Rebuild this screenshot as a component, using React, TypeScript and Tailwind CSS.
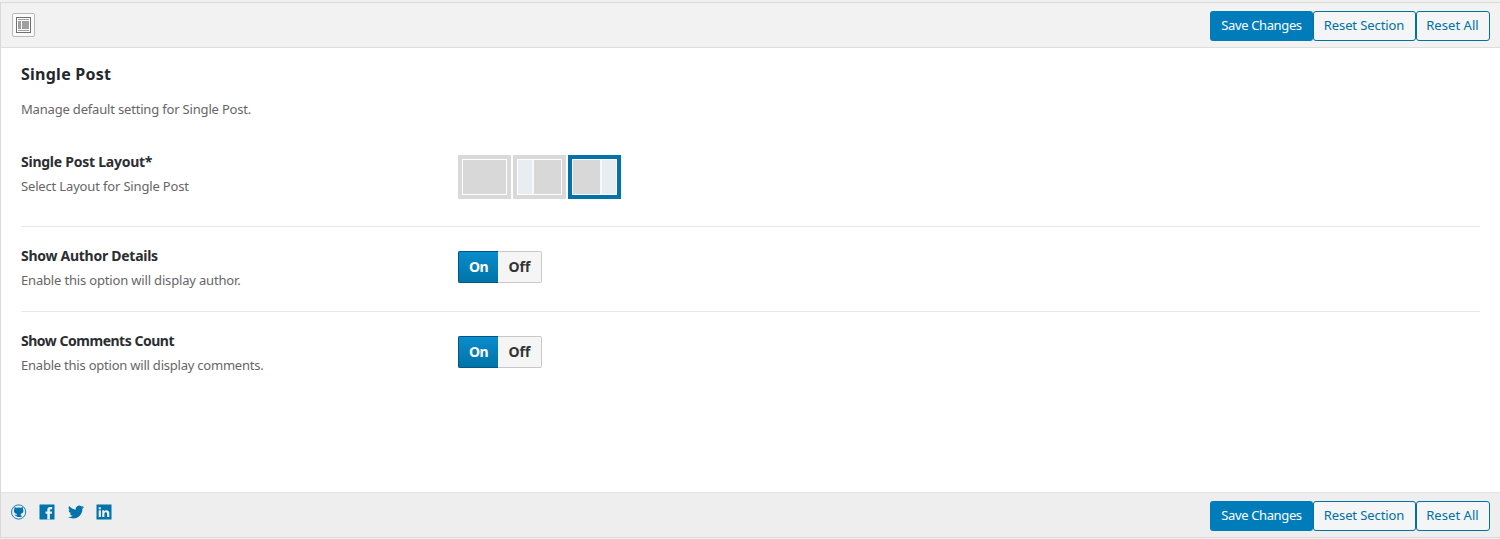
import React from "react";

function Buttons() {
  const outline =
    "flex h-[30px] items-center justify-center whitespace-nowrap rounded-[3px] border border-[#0071a1] bg-[#f3f5f6] pb-[2px] pr-px text-[13px] leading-none text-[#0071a1]";
  return (
    <div className="flex">
      <button className="flex h-[30px] w-[103px] items-center justify-center whitespace-nowrap rounded-[3px] bg-[#007cba] pb-[2px] text-[13px] leading-none text-white">
        <span className="tracking-[-0.37px]">Save Changes</span>
      </button>
      <button className={outline + " w-[103px]"}>
        <span className="tracking-[-0.1px]">Reset Section</span>
      </button>
      <button className={outline + " w-[74px]"}>
        <span className="tracking-[0.05px]">Reset All</span>
      </button>
    </div>
  );
}

function LayoutOption({ sidebar, selected }: { sidebar?: "left" | "right"; selected?: boolean }) {
  return (
    <div className={"h-11 w-[53px] border-4 " + (selected ? "border-[#0073aa]" : "border-[#d9d9d9]")}>
      <div className="flex h-9 w-[45px] gap-[2px] border border-white bg-[#f6f8f9]">
        {sidebar === "left" && <div className="h-full w-[14px] bg-[#e7edf0]" />}
        <div className="h-full flex-1 bg-[#d8d8d8]" />
        {sidebar === "right" && <div className="h-full w-[14px] bg-[#e7edf0]" />}
      </div>
    </div>
  );
}

function Switch() {
  return (
    <div className="flex h-8 w-[84px] text-[14px] font-bold leading-none">
      <div className="flex w-10 items-center justify-center rounded-l-[2px] border border-r-0 border-[#005684] bg-linear-to-b from-[#0a8ccc] to-[#0074a8] text-white">
        <span className="tracking-[-0.5px]">On</span>
      </div>
      <div className="flex w-11 items-center justify-center rounded-r-[2px] border border-l-0 border-[#c8c8c8] bg-[#f5f5f5] text-[#333]">
        <span>Off</span>
      </div>
    </div>
  );
}

function Field({
  title,
  text,
  titleClass,
  textClass,
  children,
}: {
  title: string;
  text: string;
  titleClass: string;
  textClass: string;
  children: React.ReactNode;
}) {
  return (
    <div className="flex">
      <div className="w-[437px] shrink-0">
        <div className="text-[14px] font-bold leading-5 text-[#2b2e32]">
          <span className={titleClass}>{title}</span>
        </div>
        <div className="mt-1 text-[13px] leading-5 text-[#666]">
          <span className={textClass}>{text}</span>
        </div>
      </div>
      {children}
    </div>
  );
}

function Social() {
  return (
    <div className="flex items-start gap-[12.4px] pl-[10px] pt-[11px] text-[#0073aa]">
      <svg width="16" height="16" viewBox="0 0 16 16" fill="currentColor">
        <circle cx="7.6" cy="8" r="7.1" fill="none" stroke="currentColor" strokeWidth="0.9" />
        <path d="M3.500 3 5.400 3.800Q7.600 3.300 9.900 3.800L11.800 3l.2 2.200c1 1.700.3 4.100-2.200 4.700v1.800h.9v1.300H5.800v-1.200c-1.200.3-1.800-.3-2.400-1.300 1 .2 1.400.8 2.400.5v-1.100c-2.800-.6-3.400-3-2.500-4.700z" />
      </svg>
      <svg width="16" height="16" viewBox="0 0 16 16">
        <path fill="currentColor" d="M.5.5h15v15H.5z" />
        <path fill="#eee" d="M8.300 15.500V9.800H6.500V7.500h1.800V5.900Q8.300 2.900 11.200 2.900h2v2.300h-1.300q-1 0-1 1v1.300h2.300l-.3 2.300h-2v5.700z" />
      </svg>
      <svg width="16" height="16" viewBox="0 0 24 24" fill="currentColor">
        <path d="M23.950 4.570a10 10 0 0 1-2.820.78 4.960 4.960 0 0 0 2.160-2.720c-.95.550-2 .95-3.130 1.180a4.920 4.920 0 0 0-8.380 4.480C7.690 8.100 4.070 6.130 1.640 3.160a4.820 4.820 0 0 0-.67 2.480c0 1.710.87 3.210 2.190 4.100a4.900 4.900 0 0 1-2.230-.62v.06a4.920 4.920 0 0 0 3.950 4.830 5 5 0 0 1-2.210.08 4.940 4.940 0 0 0 4.600 3.420A9.870 9.870 0 0 1 0 19.540a14 14 0 0 0 7.550 2.210c9.050 0 14-7.500 14-13.980 0-.21 0-.42-.02-.63a9.940 9.940 0 0 0 2.460-2.550z" />
      </svg>
      <svg width="16" height="16" viewBox="0 0 16 16">
        <path fill="currentColor" d="M.5.5h15v15H.5z" />
        <path fill="#eee" d="M2.700 6.300h2.200v6.700H2.700zM2.700 3.200h2.200v2H2.700zM6.200 6.300h2.100v.9c1.300-1.700 5-1.400 5 1.900V13h-2.200V9.700c0-2-2.700-2-2.700 0V13H6.200z" />
      </svg>
    </div>
  );
}

export default function App() {
  return (
    <div className="flex h-[539px] w-[1500px] flex-col overflow-hidden bg-[#f1f1f1] font-['Noto_Sans',sans-serif]">
      <div className="mt-[2px] flex h-[536px] flex-col border-b border-l border-t border-[#d9d9d9] bg-white">
        <header className="flex h-[45px] shrink-0 items-start justify-between border-b border-[#dedede] bg-[#f2f2f2] pl-[11px] pr-[10px] pt-2">
          <div className="mt-[2px] flex h-6 w-[23px] items-center justify-center rounded-[2px] border border-[#b9b9b9] bg-[#fafafa]">
            <svg width="15" height="16" viewBox="0 0 15 16" shapeRendering="crispEdges">
              <path fill="#707070" d="M0 0h15v16H0z" />
              <path fill="#fff" d="M1 1h13v14H1z" />
              <path fill="#a0a0a0" d="M2 2h11v1H2zM2 4h3v8H2zM6 4h7v8H6zM2 13h11v1H2z" />
            </svg>
          </div>
          <Buttons />
        </header>
        <main className="flex-1 px-5 pt-4">
          <h2 className="text-[16px] font-bold leading-5 text-[#23282d]">
            <span className="tracking-[0.25px]">Single Post</span>
          </h2>
          <p className="mt-[15px] text-[13px] leading-5 text-[#666]">
            <span className="tracking-[-0.18px]">Manage default setting for Single Post.</span>
          </p>
          <div className="h-[108px] border-b border-[#e7e7e7] pt-[33px]">
            <Field title="Single Post Layout*" text="Select Layout for Single Post" titleClass="tracking-[-0.25px]" textClass="tracking-[-0.16px]">
              <div className="mt-[3px] flex gap-[2px]">
                <LayoutOption />
                <LayoutOption sidebar="left" />
                <LayoutOption sidebar="right" selected />
              </div>
            </Field>
          </div>
          <div className="h-[85px] border-b border-[#e7e7e7] pt-[19px]">
            <Field title="Show Author Details" text="Enable this option will display author." titleClass="tracking-[-0.27px]" textClass="tracking-[-0.17px]">
              <div className="mt-[5px]">
                <Switch />
              </div>
            </Field>
          </div>
          <div className="pt-[19px]">
            <Field title="Show Comments Count" text="Enable this option will display comments." titleClass="tracking-[-0.48px]" textClass="tracking-[-0.22px]">
              <div className="mt-[5px]">
                <Switch />
              </div>
            </Field>
          </div>
        </main>
        <footer className="flex h-[45px] shrink-0 items-start justify-between border-t border-[#e3e3e3] bg-[#eee]">
          <Social />
          <div className="pr-[10px] pt-2">
            <Buttons />
          </div>
        </footer>
      </div>
    </div>
  );
}
